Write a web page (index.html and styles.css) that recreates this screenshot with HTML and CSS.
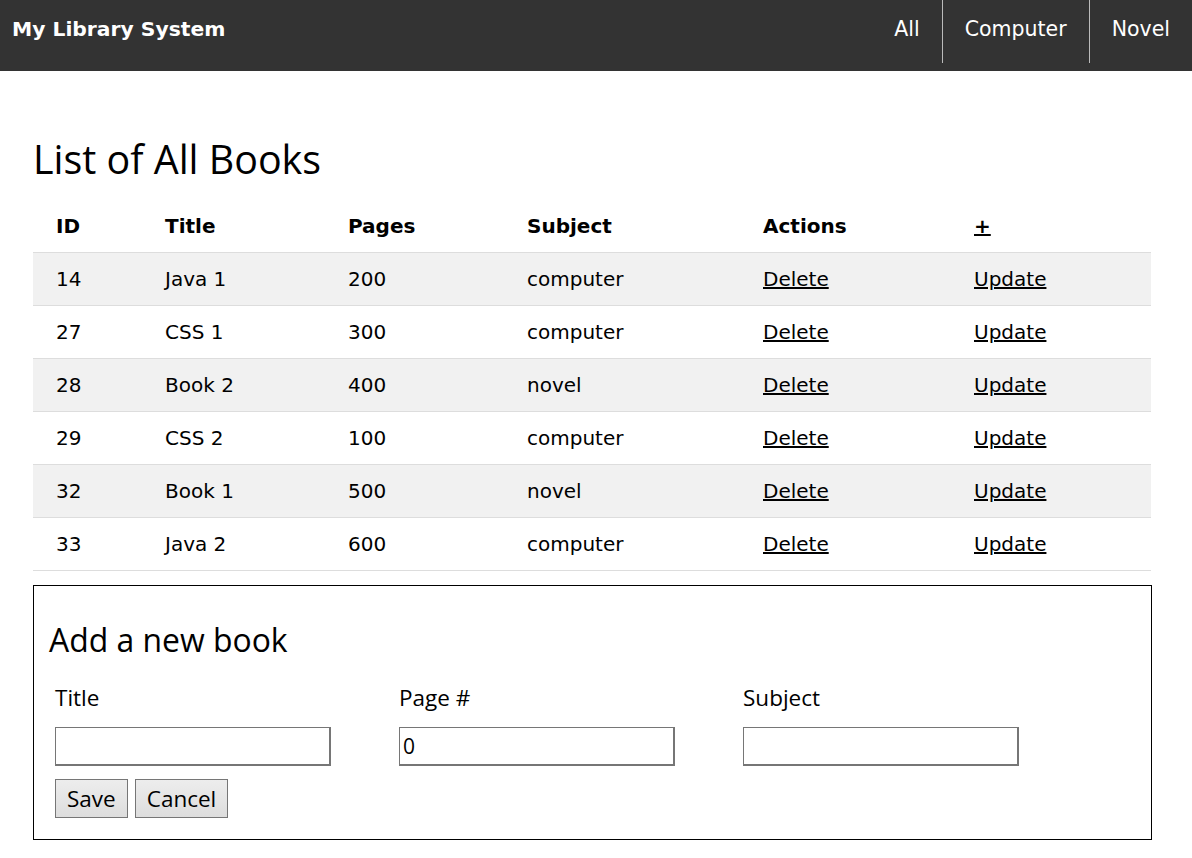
FILE: index.html
```html
<!DOCTYPE html>
<html lang="en">
<head>
<meta charset="utf-8">
<title>My Library System</title>
<link rel="stylesheet" href="styles.css">
</head>
<body>
<header class="navbar">
  <a class="brand" href="#">My Library System</a>
  <nav class="nav">
    <a class="nav-link sep" href="#">All</a>
    <a class="nav-link sep" href="#">Computer</a>
    <a class="nav-link" href="#">Novel</a>
  </nav>
</header>
<main class="content">
  <h1 class="page-title">List of All Books</h1>
  <table class="books">
    <thead>
      <tr>
        <th class="c-id">ID</th>
        <th class="c-title">Title</th>
        <th class="c-pages">Pages</th>
        <th class="c-subject">Subject</th>
        <th class="c-actions">Actions</th>
        <th class="c-add"><a href="#">+</a></th>
      </tr>
    </thead>
    <tbody>
      <tr><td>14</td><td>Java 1</td><td>200</td><td>computer</td><td><a href="#">Delete</a></td><td><a href="#">Update</a></td></tr>
      <tr><td>27</td><td>CSS 1</td><td>300</td><td>computer</td><td><a href="#">Delete</a></td><td><a href="#">Update</a></td></tr>
      <tr><td>28</td><td>Book 2</td><td>400</td><td>novel</td><td><a href="#">Delete</a></td><td><a href="#">Update</a></td></tr>
      <tr><td>29</td><td>CSS 2</td><td>100</td><td>computer</td><td><a href="#">Delete</a></td><td><a href="#">Update</a></td></tr>
      <tr><td>32</td><td>Book 1</td><td>500</td><td>novel</td><td><a href="#">Delete</a></td><td><a href="#">Update</a></td></tr>
      <tr><td>33</td><td>Java 2</td><td>600</td><td>computer</td><td><a href="#">Delete</a></td><td><a href="#">Update</a></td></tr>
    </tbody>
  </table>
  <form class="add-form">
    <h2 class="form-title">Add a new book</h2>
    <div class="fields">
      <div class="field">
        <label class="label" for="f-title">Title</label>
        <input class="input" id="f-title" type="text">
      </div>
      <div class="field">
        <label class="label" for="f-pages">Page #</label>
        <input class="input" id="f-pages" type="text" value="0">
      </div>
      <div class="field">
        <label class="label" for="f-subject">Subject</label>
        <input class="input" id="f-subject" type="text">
      </div>
    </div>
    <div class="buttons">
      <button class="btn" type="button">Save</button>
      <button class="btn" type="button">Cancel</button>
    </div>
  </form>
</main>
</body>
</html>
```
FILE: styles.css
```css
* { box-sizing: border-box; }
html, body { margin: 0; padding: 0; background: #fff; }
body {
  font-family: "DejaVu Sans", Verdana, sans-serif;
  font-size: 20px;
  color: #000;
}

.navbar {
  display: flex;
  justify-content: space-between;
  align-items: flex-start;
  height: 71px;
  background: #333333;
}
.brand {
  display: block;
  padding: 17px 0 0 12px;
  line-height: 24px;
  color: #fff;
  font-weight: bold;
  font-size: 20.3px;
  text-decoration: none;
}
.nav { display: flex; }
.nav-link {
  display: block;
  height: 63px;
  padding: 17px 22px 0 22px;
  line-height: 24px;
  color: #fff;
  text-decoration: none;
  font-size: 20.5px;
}
.nav-link.sep { border-right: 1px solid #bbbbbb; }

.content { padding: 0 41px 0 33px; }

.page-title {
  font-family: "Open Sans", "Noto Sans", sans-serif;
  font-weight: normal;
  font-size: 39.4px;
  line-height: 46px;
  margin: 65px 0 18px 0;
}

.books {
  width: 100%;
  border-collapse: collapse;
}
.books tr { border-bottom: 1px solid #dddddd; }
.books tbody tr:nth-child(odd) { background: #f1f1f1; }
.books th, .books td {
  padding: 14px 23px;
  line-height: 24px;
  text-align: left;
  font-size: 20px;
}
.books th { font-weight: bold; }
.books a { color: #000; text-decoration: underline; }
.c-id { width: 109px; }
.c-title { width: 183px; }
.c-pages { width: 179px; }
.c-subject { width: 236px; }
.c-actions { width: 211px; }
.c-add { width: 200px; }

.add-form {
  margin: 14px -1px 0 0;
  border: 1px solid #000;
  padding: 35px 15px 21px 15px;
  font-family: "Open Sans", "Noto Sans", sans-serif;
}
.form-title {
  font-weight: normal;
  font-size: 31.9px;
  line-height: 38px;
  margin: 0 0 24px 0;
}
.fields {
  display: grid;
  grid-template-columns: 344px 344px 344px;
  padding-left: 6px;
}
.field { display: flex; flex-direction: column; align-items: flex-start; }
.label {
  font-size: 22.5px;
  line-height: 30px;
  margin-bottom: 14px;
}
.input {
  width: 276px;
  height: 39px;
  border: 1px solid #767676;
  border-right-width: 2px;
  border-bottom-width: 2px;
  padding: 0 3px;
  font-family: "Open Sans", "Noto Sans", sans-serif;
  font-size: 21px;
  background: #fff;
  color: #000;
}
.buttons {
  display: flex;
  gap: 7px;
  margin-top: 13px;
  padding-left: 6px;
}
.btn {
  height: 39px;
  padding: 0 11px;
  border: 1px solid #767676;
  background: linear-gradient(#ededed, #dddddd);
  font-family: "Open Sans", "Noto Sans", sans-serif;
  font-size: 22.5px;
  line-height: 30px;
  color: #000;
}
```
